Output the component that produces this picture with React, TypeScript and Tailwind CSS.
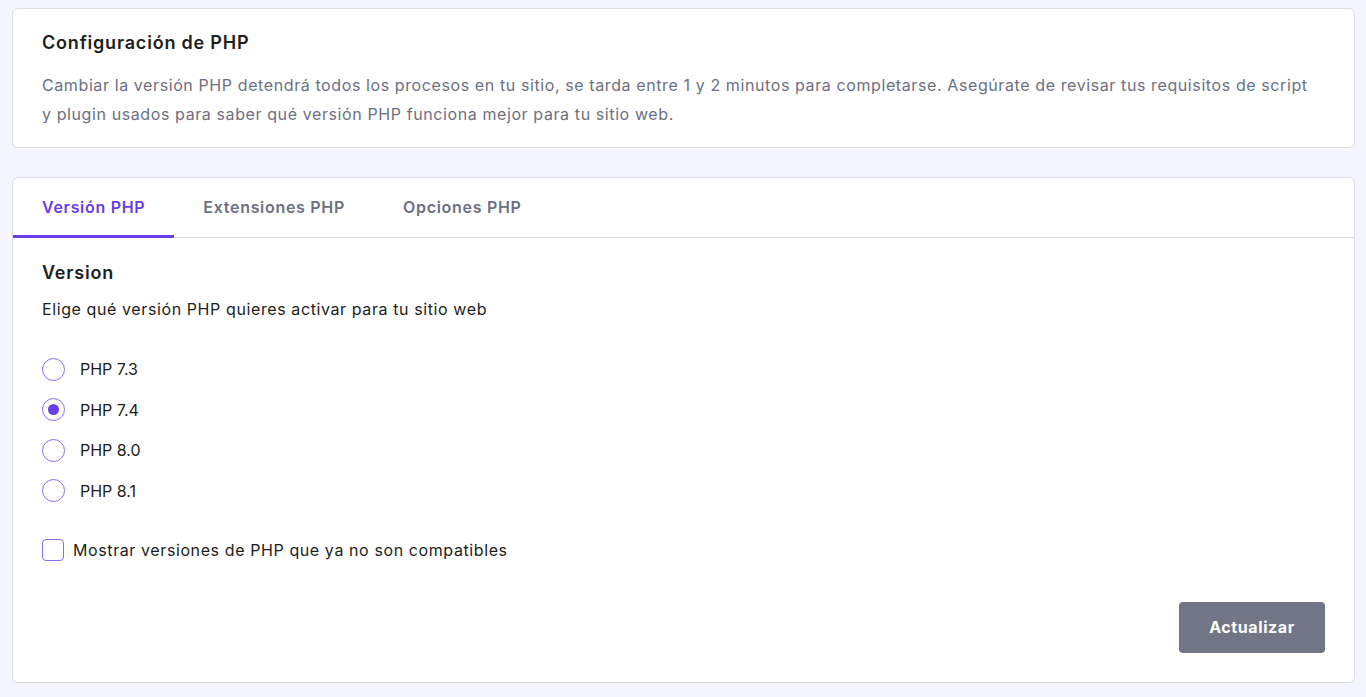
import React, { useState } from "react";

const versions = ["PHP 7.3", "PHP 7.4", "PHP 8.0", "PHP 8.1"];
const tabs = ["Versión PHP", "Extensiones PHP", "Opciones PHP"];

const App: React.FC = () => {
  const [selected, setSelected] = useState("PHP 7.4");
  const [activeTab, setActiveTab] = useState(0);
  const [showOld, setShowOld] = useState(false);

  return (
    <div
      className="min-h-screen bg-[#f4f5ff] pl-3 pr-[11px] pt-2 pb-4 text-[#1d1e20] tracking-[0.6px]"
      style={{ fontFamily: "Inter, 'Noto Sans', sans-serif" }}
    >
      {/* Intro card */}
      <div className="rounded-md border border-[#dadce0] bg-white px-[29px] pt-[21px] pb-[18px]">
        <h2 className="text-[18px] font-semibold leading-[26px] tracking-[0.8px]">Configuración de PHP</h2>
        <p className="mt-[15px] pr-[8px] text-[16px] leading-[29px] text-[#6d7081]">
          Cambiar la versión PHP detendrá todos los procesos en tu sitio, se tarda entre 1 y 2 minutos para completarse. Asegúrate de revisar tus requisitos de script y plugin usados para saber qué versión PHP funciona mejor para tu sitio web.
        </p>
      </div>

      {/* Settings card */}
      <div className="mt-[29px] rounded-md border border-[#dadce0] bg-white">
        <div className="flex border-b border-[#dadce0]">
          {tabs.map((tab, i) => (
            <button
              key={tab}
              onClick={() => setActiveTab(i)}
              className={`-mb-px h-[60px] border-b-[3px] px-[29px] text-[16px] font-semibold tracking-[0.7px] ${
                activeTab === i
                  ? "border-[#673de6] text-[#673de6]"
                  : "border-transparent text-[#6d7081]"
              }`}
            >
              {tab}
            </button>
          ))}
        </div>

        <div className="px-[29px] pt-[22px] pb-[29px]">
          <h3 className="text-[18px] font-semibold leading-[26px] tracking-[0.8px]">Version</h3>
          <p className="mt-[11px] text-[16px] leading-[24px]">
            Elige qué versión PHP quieres activar para tu sitio web
          </p>

          <div className="mt-[36px] flex flex-col gap-[16.5px]">
            {versions.map((v) => (
              <label key={v} className="flex cursor-pointer items-center gap-[15px]">
                <span className="flex h-[23px] w-[23px] items-center justify-center rounded-full border-[1.5px] border-[#8c6cf0]">
                  {selected === v && <span className="h-[11px] w-[11px] rounded-full bg-[#673de6]" />}
                </span>
                <input
                  type="radio"
                  className="hidden"
                  checked={selected === v}
                  onChange={() => setSelected(v)}
                />
                <span className="text-[16px] leading-[24px] tracking-normal">{v}</span>
              </label>
            ))}
          </div>

          <label className="mt-[35px] flex cursor-pointer items-center gap-[9px]">
            <span
              className={`h-[22px] w-[22px] rounded-[4px] border-[1.5px] border-[#8c6cf0] ${
                showOld ? "bg-[#673de6]" : "bg-white"
              }`}
            />
            <input
              type="checkbox"
              className="hidden"
              checked={showOld}
              onChange={() => setShowOld(!showOld)}
            />
            <span className="text-[16px] leading-[24px]">Mostrar versiones de PHP que ya no son compatibles</span>
          </label>

          <div className="mt-[40px] flex justify-end">
            <button className="h-[51px] w-[146px] rounded-[4px] bg-[#727586] text-[16px] font-bold text-white">
              Actualizar
            </button>
          </div>
        </div>
      </div>
    </div>
  );
};

export default App;
